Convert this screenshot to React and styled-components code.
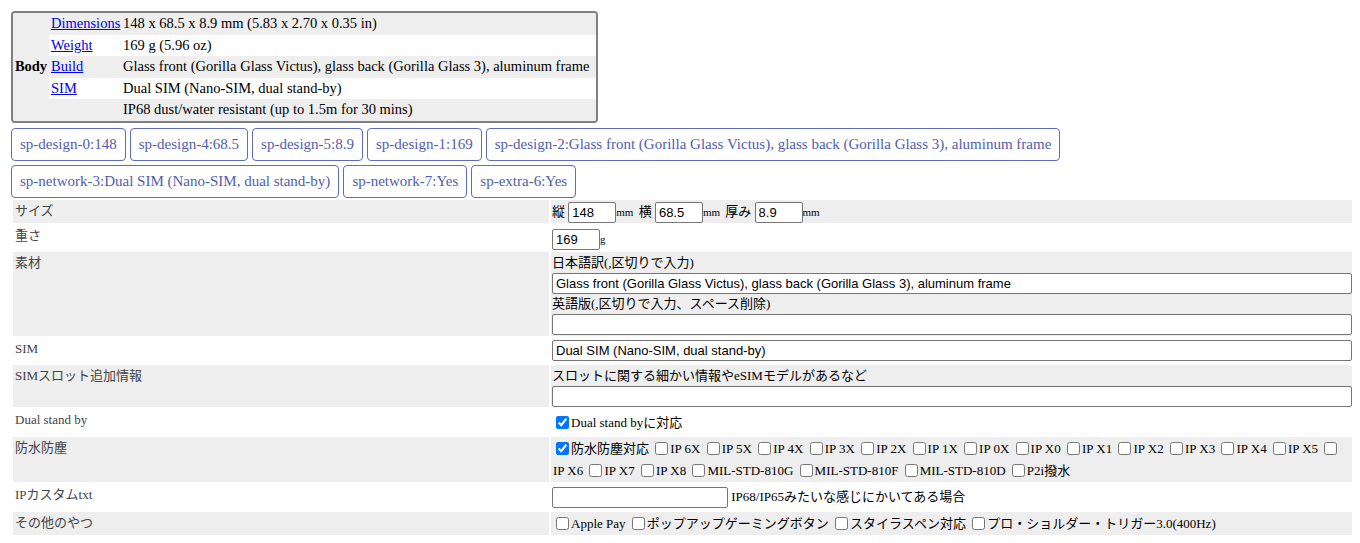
import React from 'react';
import styled, {createGlobalStyle} from 'styled-components';

const GlobalStyle = createGlobalStyle`
  html {
    overflow: hidden;
  }
  body {
    margin: 8px;
    font-family: "Liberation Serif", "Noto Sans CJK JP", serif;
    font-size: 13px;
    color: #000;
    background: #fff;
  }
`;

// ページ全体
const Page = styled.div`
  padding: 3px 0 0 3px;
`;

// 上のスペック表
const SpecBox = styled.div`
  display: grid;
  grid-template-columns: 36px 72px 1fr;
  grid-template-rows: repeat(5, 21.5px);
  width: 587px;
  box-sizing: border-box;
  border: 2px solid #808080;
  border-radius: 4px;
  overflow: hidden;
  font-size: 14.5px;
`;

const SpecHead = styled.div`
  grid-row: 1 / span 5;
  background: #eee;
  display: flex;
  align-items: center;
  justify-content: center;
  font-weight: bold;
`;

const SpecCell = styled.div`
  background: ${p => (p.$odd ? '#eee' : '#fff')};
  padding: 0 2px;
  line-height: 21.5px;
  white-space: nowrap;
  a {
    color: #0000ee;
  }
`;

// タグボタン
const TagList = styled.div`
  display: flex;
  flex-wrap: wrap;
  gap: 4px;
  margin-top: 5px;
`;

const Tag = styled.button`
  height: 33px;
  padding: 0 8px;
  background: #fff;
  border: 1px solid #5f6cb8;
  border-radius: 4px;
  color: #4f5eae;
  font-family: "Liberation Serif", serif;
  font-size: 15px;
  cursor: pointer;
`;

// 入力フォーム
const Form = styled.div`
  display: grid;
  grid-template-columns: 536px 1fr;
  gap: 2px;
  width: 1340px;
  margin: 2px 0 0 2px;
`;

const Label = styled.div`
  background: ${p => (p.$odd ? '#eee' : '#fff')};
  height: ${p => p.$h}px;
  padding: 2px 2px 0;
  box-sizing: border-box;
  color: #444;
  line-height: 18px;
`;

const Field = styled.div`
  background: ${p => (p.$odd ? '#eee' : '#fff')};
  height: ${p => p.$h}px;
  padding: ${p => p.$pad || 1}px 1px 0 ${p => p.$left || 1}px;
  box-sizing: border-box;
  line-height: ${p => p.$lh || 21}px;
`;

const Note = styled.div`
  line-height: 20px;
`;

const TextInput = styled.input`
  display: ${p => (p.$block ? 'block' : 'inline-block')};
  width: ${p => (p.$block ? '100%' : `${p.$w}px`)};
  height: 21px;
  box-sizing: border-box;
  padding: 1px 3px;
  border: 1px solid #767676;
  border-radius: 2px;
  font-family: "Liberation Sans", Arial, sans-serif;
  font-size: 13px;
  vertical-align: middle;
  background: #fff;
`;

const Unit = styled.span`
  font-size: 11px;
  margin-right: 2px;
`;

const Check = styled.label`
  input {
    margin: 3px 2px 3px 3px;
    vertical-align: -2px;
  }
  span {
    white-space: nowrap;
  }
`;

const specRows = [
  {link: 'Dimensions', value: '148 x 68.5 x 8.9 mm (5.83 x 2.70 x 0.35 in)'},
  {link: 'Weight', value: '169 g (5.96 oz)'},
  {link: 'Build', value: 'Glass front (Gorilla Glass Victus), glass back (Gorilla Glass 3), aluminum frame'},
  {link: 'SIM', value: 'Dual SIM (Nano-SIM, dual stand-by)'},
  {link: '', value: 'IP68 dust/water resistant (up to 1.5m for 30 mins)'}
];

const tags = [
  'sp-design-0:148',
  'sp-design-4:68.5',
  'sp-design-5:8.9',
  'sp-design-1:169',
  'sp-design-2:Glass front (Gorilla Glass Victus), glass back (Gorilla Glass 3), aluminum frame',
  'sp-network-3:Dual SIM (Nano-SIM, dual stand-by)',
  'sp-network-7:Yes',
  'sp-extra-6:Yes'
];

const waterItems = [
  'IP 6X', 'IP 5X', 'IP 4X', 'IP 3X', 'IP 2X', 'IP 1X', 'IP 0X',
  'IP X0', 'IP X1', 'IP X2', 'IP X3', 'IP X4', 'IP X5', 'IP X6', 'IP X7', 'IP X8',
  'MIL-STD-810G', 'MIL-STD-810F', 'MIL-STD-810D', 'P2i撥水'
];

const otherItems = ['Apple Pay', 'ポップアップゲーミングボタン', 'スタイラスペン対応', 'プロ・ショルダー・トリガー3.0(400Hz)'];

const CheckItem = ({text, checked}) => (
  <Check>
    <input type='checkbox' defaultChecked={checked} />
    <span>{text}</span>
  </Check>
);

const CheckGroup = ({items}) => (
  <>
    {items.map(item => (
      <React.Fragment key={item}>
        <CheckItem text={item} />{' '}
      </React.Fragment>
    ))}
  </>
);

const App = () => {
  // フォームの各行
  const rows = [
    {
      label: 'サイズ',
      h: 23,
      body: (
        <>
          縦 <TextInput $w={48} defaultValue='148' />
          <Unit>mm</Unit> 横 <TextInput $w={48} defaultValue='68.5' />
          <Unit>mm</Unit> 厚み <TextInput $w={48} defaultValue='8.9' />
          <Unit>mm</Unit>
        </>
      )
    },
    {
      label: '重さ',
      h: 25,
      pad: 3,
      body: (
        <>
          <TextInput $w={48} defaultValue='169' />
          <Unit>g</Unit>
        </>
      )
    },
    {
      label: '素材',
      h: 84,
      body: (
        <>
          <Note>日本語訳(,区切りで入力)</Note>
          <TextInput $block defaultValue='Glass front (Gorilla Glass Victus), glass back (Gorilla Glass 3), aluminum frame' />
          <Note>英語版(,区切りで入力、スペース削除)</Note>
          <TextInput $block defaultValue='' />
        </>
      )
    },
    {
      label: 'SIM',
      h: 25,
      pad: 2,
      body: <TextInput $block defaultValue='Dual SIM (Nano-SIM, dual stand-by)' />
    },
    {
      label: 'SIMスロット追加情報',
      h: 42,
      body: (
        <>
          <Note>スロットに関する細かい情報やeSIMモデルがあるなど</Note>
          <TextInput $block defaultValue='' />
        </>
      )
    },
    {
      label: 'Dual stand by',
      h: 26,
      pad: 3,
      left: 2,
      body: <CheckItem text='Dual stand byに対応' checked />
    },
    {
      label: '防水防塵',
      h: 45,
      lh: 22,
      left: 2,
      body: (
        <>
          <CheckItem text='防水防塵対応' checked /> <CheckGroup items={waterItems} />
        </>
      )
    },
    {
      label: 'IPカスタムtxt',
      h: 26,
      pad: 2,
      body: (
        <>
          <TextInput $w={176} defaultValue='' /> IP68/IP65みたいな感じにかいてある場合
        </>
      )
    },
    {
      label: 'その他のやつ',
      h: 23,
      left: 2,
      body: <CheckGroup items={otherItems} />
    }
  ];

  return (
    <Page>
      <GlobalStyle />
      <SpecBox>
        <SpecHead>Body</SpecHead>
        {specRows.map((row, i) => (
          <React.Fragment key={i}>
            <SpecCell $odd={i % 2 === 0}>{row.link && <a href='#'>{row.link}</a>}</SpecCell>
            <SpecCell $odd={i % 2 === 0}>{row.value}</SpecCell>
          </React.Fragment>
        ))}
      </SpecBox>
      <TagList>
        {tags.map(tag => (
          <Tag key={tag}>{tag}</Tag>
        ))}
      </TagList>
      <Form>
        {rows.map((row, i) => (
          <React.Fragment key={row.label}>
            <Label $odd={i % 2 === 0} $h={row.h}>
              {row.label}
            </Label>
            <Field $odd={i % 2 === 0} $h={row.h} $pad={row.pad} $lh={row.lh} $left={row.left}>
              {row.body}
            </Field>
          </React.Fragment>
        ))}
      </Form>
    </Page>
  );
};

export default App;
